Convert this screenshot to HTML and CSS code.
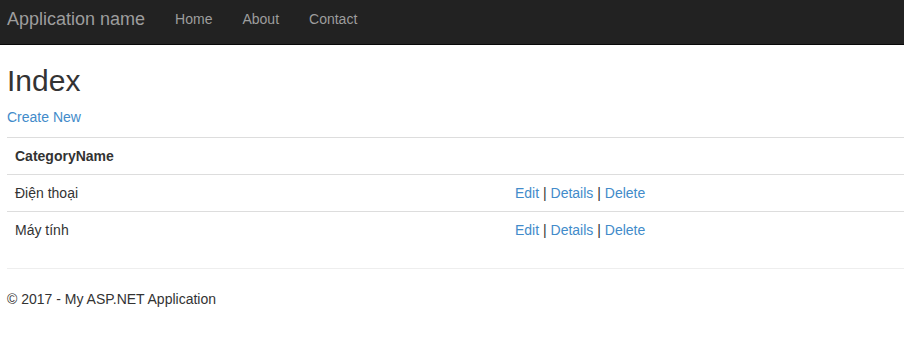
FILE: index.html
```html
<!DOCTYPE html>
<html lang="en">
<head>
    <meta charset="UTF-8">
    <meta name="viewport" content="width=device-width, initial-scale=1.0">
    <title>Index - My ASP.NET Application</title>
<link rel="stylesheet" href="styles.css">
</head>

<body>
<div class="navbar">
    <a class="navbar-brand" href="#">Application name</a>
    <ul class="nav">
        <li><a href="#">Home</a></li>
        <li><a href="#">About</a></li>
        <li><a href="#">Contact</a></li>
    </ul>
</div>
<div class="body-content">
    <h2>Index</h2>
    <p><a href="#">Create New</a></p>
    <table class="table">
        <tr>
            <th class="col-name">CategoryName</th>
            <th></th>
        </tr>
        <tr>
            <td>Điện thoại</td>
            <td><a href="#">Edit</a> | <a href="#">Details</a> | <a href="#">Delete</a></td>
        </tr>
        <tr>
            <td>Máy tính</td>
            <td><a href="#">Edit</a> | <a href="#">Details</a> | <a href="#">Delete</a></td>
        </tr>
    </table>
    <hr />
    <footer>
        <p>&copy; 2017 - My ASP.NET Application</p>
    </footer>
</div>
</body>
</html>
```

FILE: styles.css
```css
*{
	padding:0;
	margin:0;
	box-sizing:border-box;
	}
body{
	font-family:"Liberation Sans", Arial, sans-serif;
	font-size:14px;
	line-height:20px;
	color:#333;
	background:#fff;
	}
a{
	color:#428bca;
	text-decoration:none;
	}
ul{
	list-style:none;
	}

.navbar{
	height:45px;
	background:#222;
	border-bottom:1px solid #080808;
	display:flex;
	align-items:flex-start;
	padding-left:7px;
	}
.navbar-brand{
	font-size:18px;
	line-height:20px;
	color:#9d9d9d;
	padding:9px 15px 15px 0;
	}
.nav{
	display:flex;
	}
.nav a{
	display:block;
	color:#9d9d9d;
	line-height:20px;
	padding:9px 15px 15px;
	}

.body-content{
	padding-left:7px;
	}
h2{
	font-size:30px;
	font-weight:500;
	line-height:33px;
	margin:19px 0 10px;
	}
p{
	margin-bottom:10px;
	}
.table{
	width:100%;
	border-collapse:collapse;
	margin-bottom:20px;
	}
.table th,.table td{
	text-align:left;
	vertical-align:top;
	padding:8px;
	line-height:20px;
	border-top:1px solid #ddd;
	}
.table .col-name{
	width:500px;
	}
hr{
	border:0;
	border-top:1px solid #eee;
	margin:20px 0;
	}
```
